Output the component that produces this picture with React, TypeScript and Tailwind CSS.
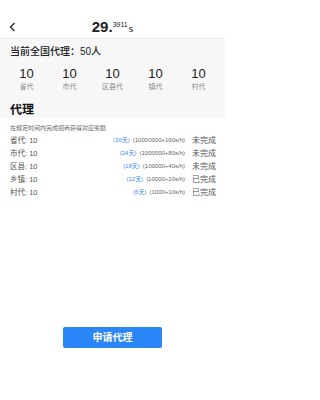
const stats = [
	{ value: "10", label: "省代" },
	{ value: "10", label: "市代" },
	{ value: "10", label: "区县代" },
	{ value: "10", label: "镇代" },
	{ value: "10", label: "村代" },
]

const rows = [
	{ name: "省代", count: "10", days: "(30天)", rate: "(10000000+160s/h)", status: "未完成" },
	{ name: "市代", count: "10", days: "(24天)", rate: "(1000000+80s/h)", status: "未完成" },
	{ name: "区县", count: "10", days: "(18天)", rate: "(100000+40s/h)", status: "未完成" },
	{ name: "乡镇", count: "10", days: "(12天)", rate: "(10000+20s/h)", status: "已完成" },
	{ name: "村代", count: "10", days: "(6天)", rate: "(1000+10s/h)", status: "已完成" },
]

export default function App() {
	return (
		<div className="h-[400px] w-[225px] overflow-hidden bg-white font-['Liberation_Sans','Noto_Sans_CJK_SC',sans-serif] text-[#222]">
			{/* status bar space */}
			<div className="h-[15px]" />

			{/* nav header */}
			<div className="grid h-[24px] grid-cols-[30px_1fr_30px] items-center border-b border-[#ececec]">
				<svg className="ml-[9px] h-[10px] w-[7px]" viewBox="0 0 7 10" fill="none">
					<polyline points="5.5,1 1.5,5 5.5,9" stroke="#222" strokeWidth="1.3" />
				</svg>
				<div className="flex items-baseline justify-center">
					<span className="text-[15px] font-semibold leading-none">29.</span>
					<span className="relative -top-[5px] text-[7px] leading-none">3911</span>
					<span className="ml-[1px] text-[9px] leading-none">s</span>
				</div>
				<div />
			</div>

			{/* summary panel */}
			<div className="h-[79px] bg-[#f7f7f7] px-[10px] pt-[6px]">
				<div className="text-[10px] font-medium leading-[14px] text-[#222]">当前全国代理：50人</div>
				<div className="-mx-[5px] mt-[8px] grid grid-cols-5">
					{stats.map((s) => (
						<div className="flex flex-col items-center" key={s.label}>
							<span className="text-[13px] leading-[14px] text-[#222]">{s.value}</span>
							<span className="mt-[1px] text-[7px] leading-[9px] text-[#888]">{s.label}</span>
						</div>
					))}
				</div>
				<div className="mt-[11px] text-[12px] font-bold leading-[16px] text-[#111]">代理</div>
			</div>

			{/* level list */}
			<div className="px-[10px] pr-[9px]">
				<div className="mt-[5px] text-[6px] leading-[10px] text-[#666]">在规定时间内完成招商获得对应奖励</div>
				<div className="mt-[1px]">
					{rows.map((r) => (
						<div className="flex h-[13px] items-center justify-between" key={r.name}>
							<span className="text-[7.5px] text-[#555]">
								{r.name}:{" "}{r.count}
							</span>
							<div className="flex items-center">
								<span className="text-[6px] text-[#3b8ded]">{r.days}</span>
								<span className="ml-[3px] text-[6px] text-[#666]">{r.rate}</span>
								<span className="ml-[7px] text-[8px] text-[#555]">{r.status}</span>
							</div>
						</div>
					))}
				</div>
			</div>

			{/* apply button */}
			<div className="mt-[128px] flex justify-center">
				<button className="h-[21px] w-[99px] rounded-[2px] bg-[#2b86f7] text-[10px] font-semibold text-white">
					申请代理
				</button>
			</div>
		</div>
	)
}
